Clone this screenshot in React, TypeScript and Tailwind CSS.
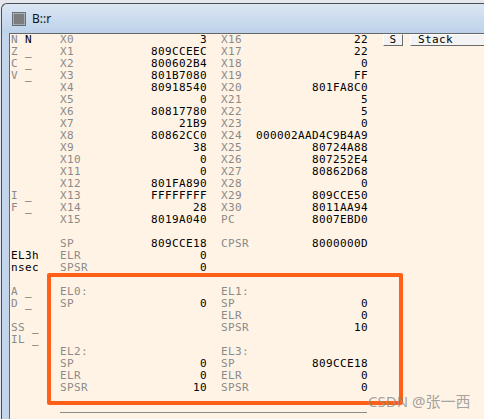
import React from "react"

// -------------------------------------------------------------------
// Data
// -------------------------------------------------------------------

type Row = {
  flag?: [string, string] | string
  n1?: string
  v1?: string
  n2?: string
  v2?: string
}

const ROWS: Row[] = [
  { flag: ["N", "N"], n1: "X0", v1: "3", n2: "X16", v2: "22" },
  { flag: ["Z", "_"], n1: "X1", v1: "809CCEEC", n2: "X17", v2: "22" },
  { flag: ["C", "_"], n1: "X2", v1: "800602B4", n2: "X18", v2: "0" },
  { flag: ["V", "_"], n1: "X3", v1: "801B7080", n2: "X19", v2: "FF" },
  { n1: "X4", v1: "80918540", n2: "X20", v2: "801FA8C0" },
  { n1: "X5", v1: "0", n2: "X21", v2: "5" },
  { n1: "X6", v1: "80817780", n2: "X22", v2: "5" },
  { n1: "X7", v1: "21B9", n2: "X23", v2: "0" },
  { n1: "X8", v1: "80862CC0", n2: "X24", v2: "000002AAD4C9B4A9" },
  { n1: "X9", v1: "38", n2: "X25", v2: "80724A88" },
  { n1: "X10", v1: "0", n2: "X26", v2: "807252E4" },
  { n1: "X11", v1: "0", n2: "X27", v2: "80862D68" },
  { n1: "X12", v1: "801FA890", n2: "X28", v2: "0" },
  { flag: ["I", "_"], n1: "X13", v1: "FFFFFFFF", n2: "X29", v2: "809CCE50" },
  { flag: ["F", "_"], n1: "X14", v1: "28", n2: "X30", v2: "8011AA94" },
  { n1: "X15", v1: "8019A040", n2: "PC", v2: "8007EBD0" },
  {},
  { n1: "SP", v1: "809CCE18", n2: "CPSR", v2: "8000000D" },
  { flag: "EL3h", n1: "ELR", v1: "0" },
  { flag: "nsec", n1: "SPSR", v1: "0" },
  {},
  { flag: ["A", "_"], n1: "EL0:", n2: "EL1:" },
  { flag: ["D", "_"], n1: "SP", v1: "0", n2: "SP", v2: "0" },
  { n2: "ELR", v2: "0" },
  { flag: ["SS", "_"], n2: "SPSR", v2: "10" },
  { flag: ["IL", "_"] },
  { n1: "EL2:", n2: "EL3:" },
  { n1: "SP", v1: "0", n2: "SP", v2: "809CCE18" },
  { n1: "ELR", v1: "0", n2: "ELR", v2: "0" },
  { n1: "SPSR", v1: "10", n2: "SPSR", v2: "0" },
]

// -------------------------------------------------------------------
// Pieces
// -------------------------------------------------------------------

function Flag({ flag }: { flag?: Row["flag"] }) {
  if (!flag) return null
  if (typeof flag === "string") return <span className="text-black">{flag}</span>
  return (
    <>
      <span className="text-[#8a8a8a]">{flag[0]}</span>{" "}
      <span className="text-black">{flag[1]}</span>
    </>
  )
}

function ChipIcon() {
  return (
    <svg width="14" height="14" viewBox="0 0 14 14">
      <rect x="1.5" y="1.5" width="11" height="11" fill="#7d7d7d" />
      <rect
        x="0.5"
        y="0.5"
        width="13"
        height="13"
        fill="none"
        stroke="#000"
        strokeWidth="1"
        strokeDasharray="1 1"
      />
    </svg>
  )
}

// -------------------------------------------------------------------
// App
// -------------------------------------------------------------------

export default function App() {
  return (
    <div className="relative w-[484px] h-[419px] overflow-hidden bg-[#e4e8ee]">
      <div className="ml-[1px] mt-[3px] h-[416px] rounded-tl-[6px] border-l border-t border-[#4f4f4f] bg-[#c2d5eb] flex flex-col">
        {/* Title bar */}
        <div className="h-[29px] shrink-0 flex items-center gap-[6px] pl-[10px] rounded-tl-[6px] bg-gradient-to-b from-[#dbe6f3] to-[#bcd2ea]">
          <ChipIcon />
          <span className="text-[12px] text-[#111] font-['Noto_Sans',sans-serif]">B::r</span>
        </div>

        {/* Register panel */}
        <div className="ml-[7px] flex-1 border-l border-t border-[#666] bg-[#fff3e5] pl-[1px] font-['DejaVu_Sans_Mono',monospace] text-[11px] tracking-[0.38px] leading-[12px]">
          {ROWS.map((r, i) => (
            <div key={i} className="flex h-[12px] items-center whitespace-pre">
              <div className="w-[49px] shrink-0">
                <Flag flag={r.flag} />
              </div>
              <div className="w-[35px] shrink-0 text-[#8a8a8a]">{r.n1}</div>
              <div className="w-[112px] shrink-0 text-right text-black">{r.v1}</div>
              <div className="w-[14px] shrink-0" />
              <div className="w-[35px] shrink-0 text-[#8a8a8a]">{r.n2}</div>
              <div className="w-[112px] shrink-0 text-right text-black">{r.v2}</div>
              {i === 0 && (
                <div className="flex items-center ml-[15px] gap-[7px]">
                  <div className="h-[12px] w-[20px] flex items-center justify-center bg-[#f3f3f3] border-l border-t border-[#fff] border-r border-b border-r-[#6b6b6b] border-b-[#6b6b6b] text-black">
                    S
                  </div>
                  <div className="h-[12px] w-[90px] flex items-center pl-[7px] bg-[#f3f3f3] border-l border-t border-[#fff] border-b border-b-[#6b6b6b] text-black">
                    Stack
                  </div>
                </div>
              )}
            </div>
          ))}
          <div className="ml-[49px] mt-[18px] h-px w-[307px] bg-[#8a8a8a]" />
        </div>
      </div>

      {/* Annotation box */}
      <div className="absolute left-[47px] top-[273px] w-[356px] h-[132px] border-4 border-[#ff5f17] rounded-[2px]" />

      {/* Watermark */}
      <div className="absolute left-[368px] top-[392px] text-[15px] leading-[18px] text-[#8c8c8c]/80 font-['Noto_Sans','Noto_Sans_CJK_SC',sans-serif]">
        CSDN @张一西
      </div>
    </div>
  )
}
